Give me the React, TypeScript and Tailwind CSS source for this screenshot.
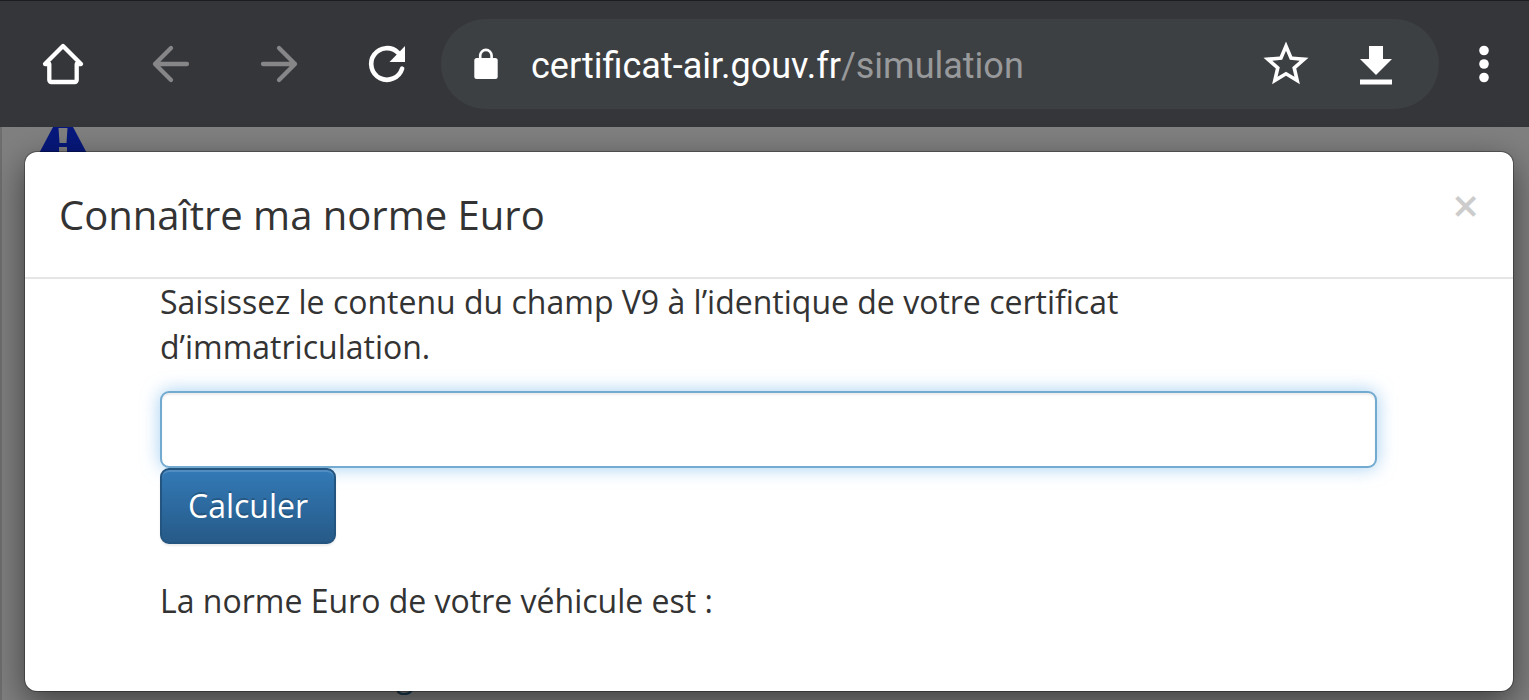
import type { ReactNode } from 'react';

type ToolbarButtonProps = {
  label: string;
  className: string;
  disabled?: boolean;
  children: ReactNode;
};

const ToolbarButton = ({ label, className, disabled, children }: ToolbarButtonProps) => (
  <button
    type="button"
    aria-label={label}
    disabled={disabled}
    className={`flex shrink-0 items-center justify-center ${className}`}
  >
    <svg width="54" height="54" viewBox="0 0 54 54" fill="none" aria-hidden="true">
      {children}
    </svg>
  </button>
);

const Toolbar = () => (
  <header className="flex items-center border-t border-[#1c1c20] bg-[#35363a] py-[18px] pl-[9px] text-white">
    <ToolbarButton label="Accueil" className="w-[108px]">
      <path
        d="M9 27 27 9l18 18h-4.3v16a2 2 0 0 1-2 2H15.3a2 2 0 0 1-2-2V27Z"
        stroke="currentColor"
        strokeWidth="4.3"
        strokeLinejoin="round"
      />
    </ToolbarButton>
    <ToolbarButton label="Précédent" className="w-[108px] text-[#868688]" disabled>
      <path
        d="M43 27H11M27 11 11 27l16 16"
        stroke="currentColor"
        strokeWidth="4.3"
        strokeLinecap="round"
        strokeLinejoin="round"
      />
    </ToolbarButton>
    <ToolbarButton label="Suivant" className="w-[108px] text-[#868688]" disabled>
      <path
        d="M11 27h32M27 11l16 16-16 16"
        stroke="currentColor"
        strokeWidth="4.3"
        strokeLinecap="round"
        strokeLinejoin="round"
      />
    </ToolbarButton>
    <ToolbarButton label="Actualiser" className="w-[108px]">
      <path
        d="M42.1 31.6A15.8 15.8 0 1 1 38.2 15.8"
        stroke="currentColor"
        strokeWidth="4.6"
        strokeLinecap="round"
      />
      <path d="M45 9v16H29.5Z" fill="currentColor" />
    </ToolbarButton>

    <div className="flex h-[90px] min-w-0 flex-1 items-center rounded-full bg-[#3d4043] pr-[18px]">
      <ToolbarButton label="Connexion sécurisée" className="w-[90px]">
        <rect x="15.3" y="21" width="23.4" height="21" rx="2.5" fill="currentColor" />
        <path d="M21.2 22v-3.4a5.7 5.7 0 0 1 11.4 0V22" stroke="currentColor" strokeWidth="2.6" />
      </ToolbarButton>
      <p className="min-w-0 flex-1 truncate pt-1 font-['Roboto',sans-serif] text-[36px] leading-[48px]">
        certificat-air.gouv.fr<span className="text-[#98999b]">/simulation</span>
      </p>
      <ToolbarButton label="Ajouter aux favoris" className="w-[90px]">
        <path
          transform="scale(2.25)"
          d="M22 9.24l-7.19-.62L12 2 9.19 8.63 2 9.24l5.46 4.73L5.82 21 12 17.27 18.18 21l-1.63-7.03L22 9.24zM12 15.4l-3.76 2.27 1-4.28-3.32-2.88 4.38-.38L12 6.1l1.71 4.04 4.38.38-3.32 2.88 1 4.28L12 15.4z"
          fill="currentColor"
        />
      </ToolbarButton>
      <ToolbarButton label="Télécharger" className="w-[90px]">
        <path d="M20 9h14v13h9L27 38 11 22h9ZM11 42.5h32v5H11Z" fill="currentColor" />
      </ToolbarButton>
    </div>

    <ToolbarButton label="Menu" className="w-[90px]">
      <circle cx="27" cy="13.5" r="4.8" fill="currentColor" />
      <circle cx="27" cy="27" r="4.8" fill="currentColor" />
      <circle cx="27" cy="40.5" r="4.8" fill="currentColor" />
    </ToolbarButton>
  </header>
);

// Page content that stays visible around the dialog
const Backdrop = () => (
  <div
    aria-hidden="true"
    className="absolute inset-0 flex flex-col items-start justify-between overflow-hidden border-l-2 border-[#6e6e6e] bg-[#808080]"
  >
    <svg className="ml-9" width="50" height="30" viewBox="0 0 50 30">
      <path d="M15 0h20l16 30H-1Z" fill="#06187c" />
      <path d="M20.500 1h9l-1 15h-7ZM21 20h8v10h-8Z" fill="#808080" />
    </svg>
    <span className="ml-[394px] font-['Open_Sans',sans-serif] text-[32px] leading-[51px] text-[#1b3b50]">g</span>
  </div>
);

const EuroDialog = () => (
  <section
    role="dialog"
    aria-labelledby="dialog-title"
    className="relative rounded-[13px] border border-black/30 bg-white bg-clip-padding shadow-[0_11px_34px_rgba(0,0,0,0.5)]"
  >
    <div className="flex items-start justify-between border-b-2 border-[#e5e5e5] px-[34px] pt-[34px] pb-[33px]">
      <h1 id="dialog-title" className="text-[40px] leading-[58px]">
        Connaître ma norme Euro
      </h1>
      <button type="button" aria-label="Fermer" className="text-[47px] leading-[38px] font-semibold text-[#cccccc]">
        ×
      </button>
    </div>

    <form className="pr-[136px] pb-[68px] pl-[135px] text-[32px] leading-[45px]" onSubmit={(e) => e.preventDefault()}>
      <label htmlFor="champ-v9" className="mb-[22px] block">
        Saisissez le contenu du champ V9 à l’identique de votre certificat d’immatriculation.
      </label>
      <input
        id="champ-v9"
        type="text"
        className="block h-[77px] w-full rounded-[9px] border-2 border-[#72aad0] bg-white px-[26px] shadow-[inset_0_2px_2px_rgba(0,0,0,0.075),0_0_18px_rgba(102,175,233,0.6)] outline-none"
      />
      <button
        type="submit"
        className="relative block h-[76px] rounded-[9px] border-2 border-[#245580] bg-linear-to-b from-[#337ab7] to-[#265a88] px-[26px] pb-0.5 text-white shadow-[inset_0_2px_0_rgba(255,255,255,0.15),0_2px_2px_rgba(0,0,0,0.075)] text-shadow-[0_-2px_0_rgba(0,0,0,0.2)]"
      >
        Calculer
      </button>
      <p className="mt-[34px]">La norme Euro de votre véhicule est :</p>
    </form>
  </section>
);

const App = () => (
  <div className="flex min-h-screen flex-col">
    <Toolbar />
    <main className="relative flex-1 pt-6 pr-[15px] pb-2 pl-6 font-['Open_Sans',sans-serif] text-[#333333]">
      <Backdrop />
      <EuroDialog />
    </main>
  </div>
);

export default App;
